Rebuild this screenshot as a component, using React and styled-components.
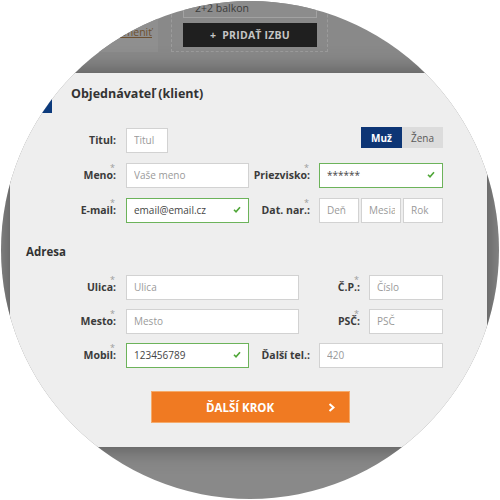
import React from "react";
import styled, { createGlobalStyle } from "styled-components";

const GlobalStyle = createGlobalStyle`
  html, body { margin: 0; padding: 0; background: #ffffff; }
  body { font-family: "Open Sans", "Liberation Sans", sans-serif; }
  * { box-sizing: border-box; }
`;

const Frame = styled.div`
  width: 500px;
  height: 500px;
  background: #ffffff;
`;

const Circle = styled.div`
  width: 500px;
  height: 500px;
  clip-path: circle(249px at 250px 250px);
  background: #898989;
  display: flex;
  flex-direction: column;
  overflow: hidden;
`;

/* ---------- dimmed page behind the dialog ---------- */
const TopArea = styled.div`
  height: 73px;
  flex-shrink: 0;
  overflow: hidden;
`;

const TopRow = styled.div`
  display: flex;
  align-items: flex-start;
  margin-top: -20px;
`;

const LeftCard = styled.div`
  width: 158px;
  height: 72px;
  background: #8f8f8f;
  display: flex;
  align-items: flex-end;
  justify-content: flex-end;
  padding: 0 6px 13px 0;
`;

const ChangeLink = styled.a`
  font-size: 10.5px;
  color: #6d5030;
  text-decoration: underline;
`;

const DashedBox = styled.div`
  width: 157px;
  height: 72px;
  margin-left: 13px;
  border: 1px dashed #9c9c9c;
  padding: 9px 10px 4px 11px;
  display: flex;
  flex-direction: column;
  gap: 5px;
`;

const InfoBox = styled.div`
  height: 28px;
  border: 1px solid #a2a2a2;
  background: #8c8c8c;
  display: flex;
  align-items: flex-end;
  padding: 0 0 2px 11px;
  font-size: 10.5px;
  color: #3c3c3c;
`;

const DarkButton = styled.div`
  height: 24px;
  background: #1f1f1f;
  color: #c4c4c4;
  font-weight: 700;
  font-size: 10.5px;
  display: flex;
  align-items: center;
  justify-content: center;
  gap: 6px;
  letter-spacing: 0.2px;
`;

/* ---------- dialog ---------- */
const Panel = styled.div`
  position: relative;
  z-index: 1;
  margin-left: 10px;
  width: 477px;
  height: 374px;
  flex-shrink: 0;
  background: #eeeeee;
  box-shadow: 0 0 22px rgba(0, 0, 0, 0.42);
  padding-top: 12px;
`;

const Ribbon = styled.div`
  position: absolute;
  left: -12px;
  top: 26px;
  width: 54px;
  height: 14px;
  background: #0c3a7c;
`;

const Title = styled.h2`
  margin: 0 0 0 61px;
  font-size: 12.5px;
  line-height: 18px;
  font-weight: 700;
  color: #333333;
`;

const Section = styled.div`
  width: 433px;
  display: flex;
  flex-direction: column;
  gap: ${(p) => p.$gap}px;
  margin-top: ${(p) => p.$mt}px;
`;

const Row = styled.div`
  display: flex;
  align-items: center;
  height: 25px;
`;

const Heading = styled.h3`
  margin: 22px 0 0 16px;
  font-size: 11.5px;
  line-height: 16px;
  font-weight: 700;
  color: #333333;
`;

const Label = styled.label`
  flex-shrink: 0;
  width: ${(p) => p.$w}px;
  padding-right: ${(p) => p.$pr}px;
  text-align: right;
  font-size: 10.5px;
  font-weight: 700;
  color: #3b3b3b;
  white-space: nowrap;
`;

const LabelText = styled.span`
  position: relative;
  display: inline-block;
`;

const Star = styled.span`
  position: absolute;
  right: 1px;
  top: -5px;
  font-size: 9px;
  font-weight: 400;
  line-height: 1;
  color: #9c9c9c;
`;

const FieldWrap = styled.div`
  position: relative;
  flex-shrink: 0;
  width: ${(p) => p.$w}px;
  height: 25px;
  margin-right: ${(p) => p.$mr || 0}px;
`;

const Input = styled.input`
  width: 100%;
  height: 100%;
  margin: 0;
  border: 1px solid ${(p) => (p.$ok ? "#6cb35a" : "#d2d2d2")};
  background: #ffffff;
  padding: 0 5px 0 7px;
  font-family: "Open Sans", "Liberation Sans", sans-serif;
  font-size: 10px;
  color: ${(p) => (p.$muted ? "#999999" : "#454545")};
  outline: none;
  &::placeholder { color: #9a9a9a; opacity: 1; }
`;

const CheckMark = styled.svg`
  position: absolute;
  right: 8px;
  top: 9px;
`;

const Toggle = styled.div`
  display: flex;
  align-self: flex-start;
  margin-left: auto;
`;

const ToggleBtn = styled.div`
  width: 41px;
  height: 21px;
  display: flex;
  align-items: center;
  justify-content: center;
  font-size: 10px;
  font-weight: ${(p) => (p.$active ? 700 : 400)};
  background: ${(p) => (p.$active ? "#0d3575" : "#dcdcdc")};
  color: ${(p) => (p.$active ? "#ffffff" : "#5a5a5a")};
`;

const NextButton = styled.button`
  margin: 24px 0 0 141px;
  width: 199px;
  height: 32px;
  background: #f07a22;
  border: 1px solid #f5aa6a;
  display: flex;
  align-items: center;
  padding: 0;
  cursor: pointer;
  font-family: "Open Sans", "Liberation Sans", sans-serif;
`;

const NextLabel = styled.span`
  flex: 1;
  text-align: center;
  color: #ffffff;
  font-weight: 700;
  font-size: 11.5px;
`;

const Chevron = styled.svg`
  margin-right: 14px;
`;

function Check() {
  return (
    <CheckMark width="8" height="7" viewBox="0 0 8 7">
      <polyline points="1,3.8 3,5.8 7,1.2" fill="none" stroke="#4fa637" strokeWidth="1.6" />
    </CheckMark>
  );
}

function FieldLabel({ w, pr = 10, req, children }) {
  return (
    <Label $w={w} $pr={pr}>
      <LabelText>
        {req && <Star>*</Star>}
        {children}
      </LabelText>
    </Label>
  );
}

function Field({ w, mr, ok, muted, placeholder, value }) {
  return (
    <FieldWrap $w={w} $mr={mr}>
      <Input
        $ok={ok}
        $muted={muted}
        placeholder={placeholder}
        defaultValue={value}
        readOnly
      />
      {ok && <Check />}
    </FieldWrap>
  );
}

export default function App() {
  return (
    <>
      <GlobalStyle />
      <Frame>
        <Circle>
          <TopArea>
            <TopRow>
              <LeftCard>
                <ChangeLink>zmeniť</ChangeLink>
              </LeftCard>
              <DashedBox>
                <InfoBox>2+2 balkon</InfoBox>
                <DarkButton>
                  <span>+</span>
                  <span>PRIDAŤ IZBU</span>
                </DarkButton>
              </DashedBox>
            </TopRow>
          </TopArea>

          <Panel>
            <Ribbon />
            <Title>Objednávateľ (klient)</Title>

            <Section $gap={10} $mt={24}>
              <Row>
                <FieldLabel w={116}>Titul:</FieldLabel>
                <Field w={42} placeholder="Titul" />
                <Toggle>
                  <ToggleBtn $active>Muž</ToggleBtn>
                  <ToggleBtn>Žena</ToggleBtn>
                </Toggle>
              </Row>
              <Row>
                <FieldLabel w={116} req>Meno:</FieldLabel>
                <Field w={123} placeholder="Vaše meno" />
                <FieldLabel w={70} pr={9} req>Priezvisko:</FieldLabel>
                <Field w={124} ok value="******" />
              </Row>
              <Row>
                <FieldLabel w={116} req>E-mail:</FieldLabel>
                <Field w={123} ok value="email@email.cz" />
                <FieldLabel w={70} pr={9} req>Dat. nar.:</FieldLabel>
                <Field w={40} mr={2} placeholder="Deň" />
                <Field w={40} mr={2} placeholder="Mesiac" />
                <Field w={40} placeholder="Rok" />
              </Row>
            </Section>

            <Heading>Adresa</Heading>

            <Section $gap={9} $mt={14}>
              <Row>
                <FieldLabel w={116} req>Ulica:</FieldLabel>
                <Field w={173} placeholder="Ulica" />
                <FieldLabel w={70} pr={9} req>Č.P.:</FieldLabel>
                <Field w={74} placeholder="Číslo" />
              </Row>
              <Row>
                <FieldLabel w={116} req>Mesto:</FieldLabel>
                <Field w={173} placeholder="Mesto" />
                <FieldLabel w={70} pr={9} req>PSČ:</FieldLabel>
                <Field w={74} placeholder="PSČ" />
              </Row>
              <Row>
                <FieldLabel w={116} req>Mobil:</FieldLabel>
                <Field w={123} ok value="123456789" />
                <FieldLabel w={70} pr={9}>Ďalší tel.:</FieldLabel>
                <Field w={124} muted value="420" />
              </Row>
            </Section>

            <NextButton type="button">
              <NextLabel>ĎALŠÍ KROK</NextLabel>
              <Chevron width="7" height="9" viewBox="0 0 7 9">
                <polyline points="1.5,1 5.5,4.5 1.5,8" fill="none" stroke="#ffffff" strokeWidth="2" />
              </Chevron>
            </NextButton>
          </Panel>
        </Circle>
      </Frame>
    </>
  );
}
